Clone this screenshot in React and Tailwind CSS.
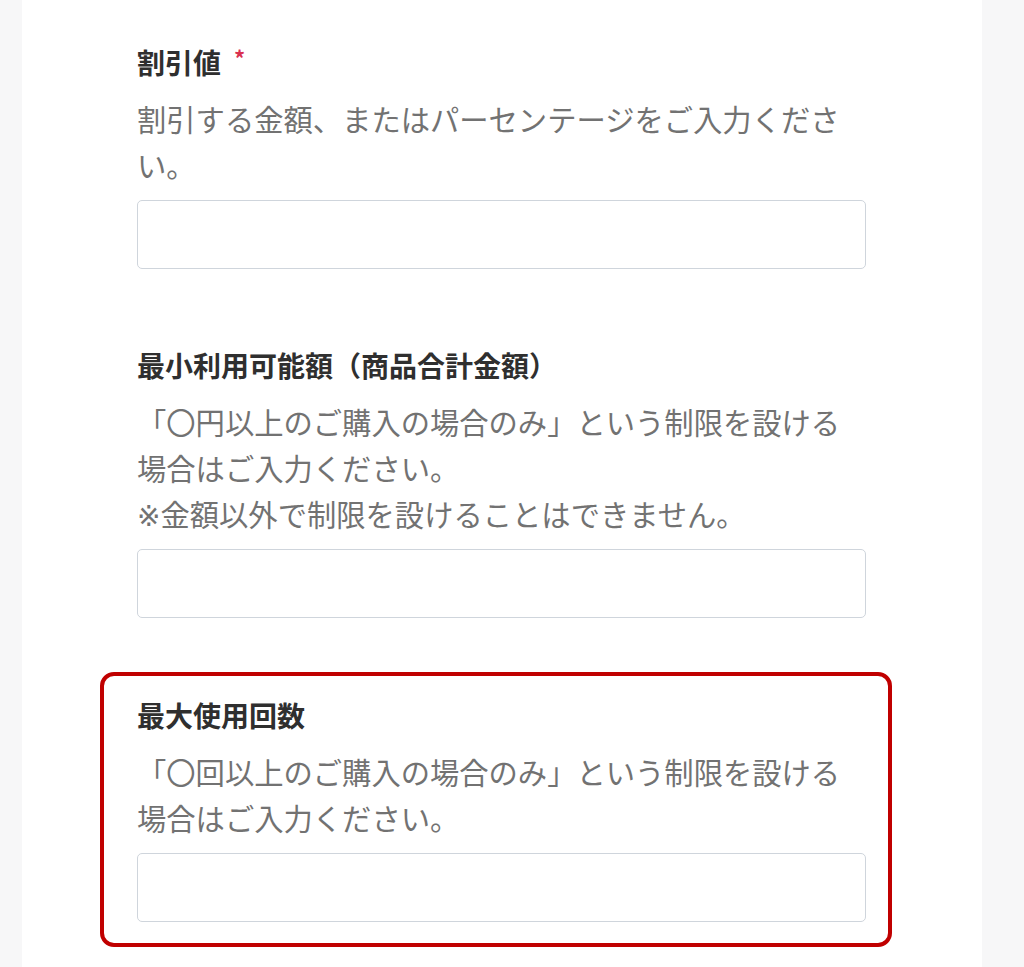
const font = { fontFamily: '"Noto Sans CJK JP", "Noto Sans", sans-serif' }

const Field = ({ title, required, children }) => (
  <div>
    <div className="flex items-start text-[28px] leading-[40px] font-bold text-[#2f2f2f]">
      <span>{title}</span>
      {required && <span className="ml-[13px] mt-[3px] text-[22px] leading-[24px] font-bold text-[#d9304f]">*</span>}
    </div>
    <p className="mt-[13px] text-[29.3px] leading-[46px] text-[#727272]">{children}</p>
    <input className="mt-[13px] block h-[69px] w-full rounded-[5px] border border-[#cfd5dc] bg-white px-4 text-[28px] outline-none" />
  </div>
)

const App = () => {
  return (
    <div style={font} className="min-h-screen bg-[#f7f7f8]">
      <div className="ml-[22px] w-[960px] bg-white pl-[115px] pr-[116px] pt-[42px] pb-[60px]">
        <Field title="割引値" required>
          割引する金額、またはパーセンテージをご入力ください。
        </Field>
        <div className="mt-[76px]">
          <Field title="最小利用可能額（商品合計金額）">
            「〇円以上のご購入の場合のみ」という制限を設ける場合はご入力ください。
            <br />
            <span style={{ fontFamily: '"DejaVu Sans", "Noto Sans CJK JP", sans-serif' }} className="text-[28px] leading-none">※</span>
            金額以外で制限を設けることはできません。
          </Field>
        </div>
        <div className="mt-[54px] -ml-[37px] -mr-[26px] rounded-[14px] border-[4px] border-[#c00000] pl-[33px] pr-[22px] pt-[19px] pb-[21px]">
          <Field title="最大使用回数">
            「〇回以上のご購入の場合のみ」という制限を設ける場合はご入力ください。
          </Field>
        </div>
      </div>
    </div>
  )
}

export default App
